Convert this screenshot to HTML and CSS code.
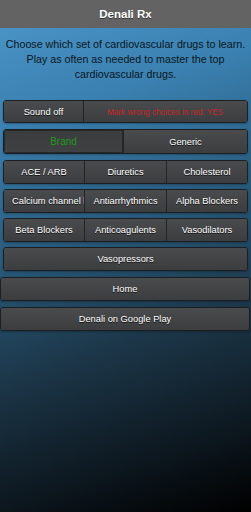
FILE: index.html
```html
<!DOCTYPE html>
<html>
<head>
<meta charset="utf-8">
<link rel="stylesheet" href="styles.css">
</head>
<body>
<div class="page">
  <header class="bar">Denali Rx</header>
  <p class="intro">Choose which set of cardiovascular drugs to learn. Play as often as needed to master the top cardiovascular drugs.</p>
  <div class="group g-sound">
    <div class="btn">Sound off</div>
    <div class="btn red"><span class="narrow">Mark wrong choices in red: YES</span></div>
  </div>
  <div class="group g-half">
    <div class="btn on green">Brand</div>
    <div class="btn">Generic</div>
  </div>
  <div class="group g-three">
    <div class="btn">ACE / ARB</div>
    <div class="btn">Diuretics</div>
    <div class="btn">Cholesterol</div>
  </div>
  <div class="group g-three">
    <div class="btn clip"><span class="cliptext">Calcium channel blockers</span></div>
    <div class="btn">Antiarrhythmics</div>
    <div class="btn">Alpha Blockers</div>
  </div>
  <div class="group g-three">
    <div class="btn">Beta Blockers</div>
    <div class="btn">Anticoagulents</div>
    <div class="btn">Vasodilators</div>
  </div>
  <div class="group g-one">
    <div class="btn">Vasopressors</div>
  </div>
  <div class="group g-wide">
    <div class="btn">Home</div>
  </div>
  <div class="group g-wide">
    <div class="btn">Denali on Google Play</div>
  </div>
</div>
</body>
</html>
```
FILE: styles.css
```css
html, body {
  margin: 0;
  padding: 0;
}
body {
  width: 251px;
  height: 512px;
  overflow: hidden;
  font-family: "Liberation Sans", Arial, sans-serif;
  background: linear-gradient(162deg, #4d97ca 0%, #3a80b0 22%, #28597a 45%, #1c3648 65%, #0d1820 85%, #000 100%);
}
.page {
  display: flex;
  flex-direction: column;
}
.bar {
  height: 28px;
  line-height: 29px;
  background: #636363;
  color: #fff;
  font-weight: bold;
  font-size: 11.5px;
  text-align: center;
  text-shadow: 0 1px 0 #333;
}
.intro {
  margin: 8px 2px 0;
  padding-top: 1px;
  font-size: 10.7px;
  line-height: 15px;
  color: #0a1620;
  text-align: center;
  height: 63px;
}
.group {
  display: grid;
  margin: 0 3px 6px;
  border: 1px solid #1b1f22;
  border-radius: 3px;
  overflow: hidden;
  box-shadow: 0 1px 2px rgba(0,0,0,0.25);
}
.g-sound { grid-template-columns: 79px 1fr; height: 21px; margin-bottom: 6px; }
.g-half { grid-template-columns: 119px 1fr; height: 23px; }
.g-three { grid-template-columns: 80px 82px 1fr; height: 22px; margin-bottom: 5px; }
.g-one { grid-template-columns: 1fr; height: 22px; }
.g-wide { grid-template-columns: 1fr; height: 22px; margin: 0 1px 6px 0; }
.btn {
  background: linear-gradient(#4a4b4d, #3c3d3f);
  color: #fff;
  font-size: 9.3px;
  text-align: center;
  display: flex;
  align-items: center;
  justify-content: center;
  white-space: nowrap;
  overflow: hidden;
  text-shadow: 0 1px 0 #111;
  border-left: 1px solid #222527;
}
.btn:first-child { border-left: none; }
.clip { justify-content: flex-start; padding-left: 8px; }
.cliptext { display: block; overflow: hidden; width: 72px; }
.red { color: #c8262a; text-shadow: none; }
.narrow { display: inline-block; transform: scaleX(0.88); }
.green { color: #1f9a1c; text-shadow: none; font-size: 10px; }
.on { background: linear-gradient(#3b3c3e, #404143); box-shadow: inset 0 0 0 1px #26282a; }
```
